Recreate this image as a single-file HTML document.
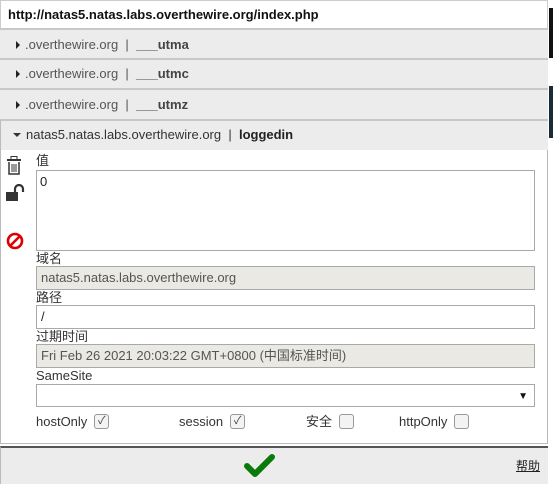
<!DOCTYPE html><html><head><style>
body{margin:0;width:553px;height:484px;overflow:hidden;background:#fff;font-family:"Liberation Sans","Noto Sans CJK SC",sans-serif;font-size:13px;color:#222;position:relative;line-height:15px}
.a{position:absolute}
.row{left:0;width:548px;background:#ececec;border-top:2px solid #c8c8c8;box-sizing:border-box;color:#555;font-size:13px}
.row b{color:#444}
.tri{display:inline-block;width:0;height:0;border-left:4px solid #222;border-top:4px solid transparent;border-bottom:4px solid transparent;margin:0 5px 0 16px;vertical-align:0}
.lbl{left:36px;font-size:13px;color:#333;line-height:15px}
.inp{left:36px;width:499px;border:1px solid #a9a9a9;box-sizing:border-box;padding:3px 4px;font-size:13px;line-height:15px}
.ck{display:flex;align-items:center;color:#333;height:16px}
.cb{display:inline-block;width:13px;height:13px;border:1px solid #999;border-radius:3px;background:#f3f3f3;margin-left:7px;font-size:11px;line-height:13px;text-align:center;color:#444}
</style></head><body>
<div class="a" style="left:0;top:0;width:548px;height:29px;border:1px solid #ccc;box-sizing:border-box;font-weight:bold;font-size:13px;color:#111;padding:6px 0 0 7px">http://natas5.natas.labs.overthewire.org/index.php</div>
<div class="a" style="left:549px;top:0;width:4px;height:484px;background:#fff"></div>
<div class="a" style="left:549px;top:8px;width:4px;height:50px;background:#111"></div>
<div class="a" style="left:549px;top:86px;width:4px;height:52px;background:#1a2a3a"></div>
<div class="a row" style="top:28px;height:31px;padding-top:7px"><span class="tri"></span>.overthewire.org &nbsp;|&nbsp; <b>___utma</b></div>
<div class="a row" style="top:58px;height:31px;padding-top:6px"><span class="tri"></span>.overthewire.org &nbsp;|&nbsp; <b>___utmc</b></div>
<div class="a row" style="top:88px;height:32px;padding-top:7px"><span class="tri"></span>.overthewire.org &nbsp;|&nbsp; <b>___utmz</b></div>
<div class="a row" style="top:119px;height:31px;padding-top:6px;color:#333;border-left:1px solid #bbb"><span style="display:inline-block;width:0;height:0;border-top:4px solid #333;border-left:4px solid transparent;border-right:4px solid transparent;margin:0 5px 0 12px;vertical-align:2px"></span>natas5.natas.labs.overthewire.org &nbsp;|&nbsp; <b style="color:#222">loggedin</b></div>
<div class="a" style="left:0;top:150px;width:548px;height:294px;border:1px solid #bbb;border-top:0;box-sizing:border-box"></div>
<svg class="a" style="left:6px;top:156px" width="16" height="20" viewBox="0 0 16 20"><rect x="1" y="3" width="14" height="2" fill="#333"/><rect x="5" y="0.5" width="6" height="3" fill="none" stroke="#333"/><path d="M3 6v12h10V6" fill="none" stroke="#333" stroke-width="1.5"/><path d="M6 8v8M8 8v8M10 8v8" stroke="#333"/></svg>
<svg class="a" style="left:5px;top:184px" width="22" height="18" viewBox="0 0 22 18"><rect x="1" y="8" width="12" height="9" fill="#333"/><path d="M10 9V5a4 4 0 0 1 8 0v3" fill="none" stroke="#333" stroke-width="2.2"/></svg>
<svg class="a" style="left:6px;top:232px" width="18" height="18" viewBox="0 0 18 18"><circle cx="9" cy="9" r="7" fill="none" stroke="#d00" stroke-width="2.6"/><path d="M4 14L14 4" stroke="#d00" stroke-width="2.6"/></svg>
<div class="a lbl" style="top:153px">值</div>
<div class="a inp" style="top:170px;height:81px;padding:3px 3px">0</div>
<div class="a lbl" style="top:251px">域名</div>
<div class="a inp" style="top:266px;height:24px;background:#ebe9e3;color:#555">natas5.natas.labs.overthewire.org</div>
<div class="a lbl" style="top:290px">路径</div>
<div class="a inp" style="top:305px;height:24px">/</div>
<div class="a lbl" style="top:329px">过期时间</div>
<div class="a inp" style="top:344px;height:24px;background:#ebe9e3;color:#555">Fri Feb 26 2021 20:03:22 GMT+0800 (中国标准时间)</div>
<div class="a lbl" style="top:368px">SameSite</div>
<div class="a inp" style="top:384px;height:23px"><span style="position:absolute;right:6px;top:4px;font-size:10px;color:#111">▼</span></div>
<div class="a ck" style="left:36px;top:413px">hostOnly<span class="cb">✓</span></div>
<div class="a ck" style="left:179px;top:413px">session<span class="cb">✓</span></div>
<div class="a ck" style="left:306px;top:413px">安全<span class="cb"></span></div>
<div class="a ck" style="left:399px;top:413px">httpOnly<span class="cb"></span></div>
<div class="a" style="left:0;top:446px;width:548px;height:38px;background:#ececec;border-top:2px solid #555;border-left:1px solid #bbb;box-sizing:border-box"></div>
<svg class="a" style="left:244px;top:453px" width="32" height="26" viewBox="0 0 32 26"><path d="M3 13l8 8L28 4" fill="none" stroke="#0a7a0a" stroke-width="6" stroke-linecap="round" stroke-linejoin="round"/></svg>
<div class="a" style="left:516px;top:459px;font-size:12px;text-decoration:underline;color:#222">帮助</div>
</body></html>
